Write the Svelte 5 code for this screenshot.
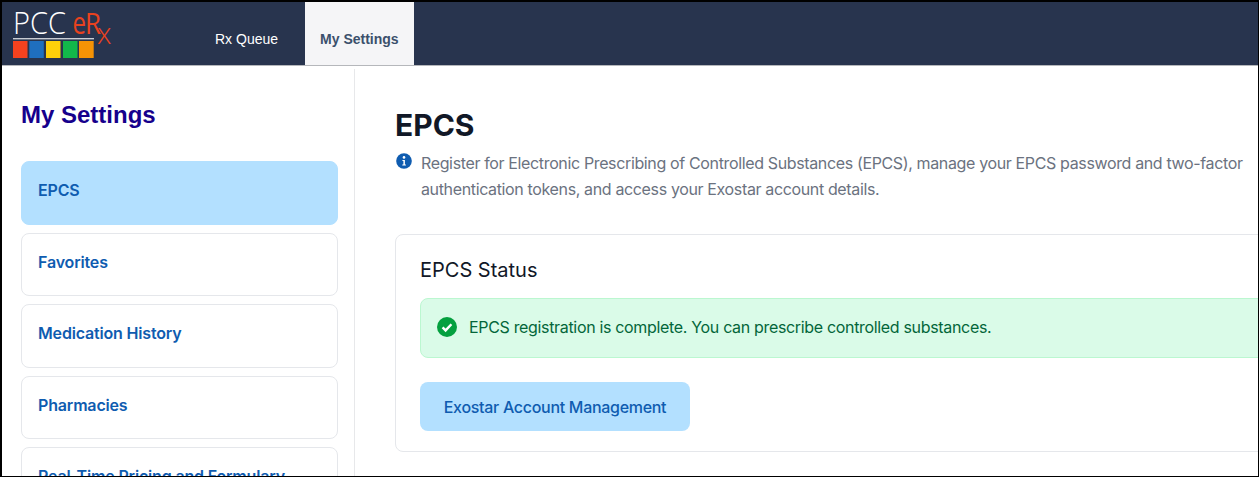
<script lang="ts">
	const tabs = [
		{ label: 'Rx Queue', active: false },
		{ label: 'My Settings', active: true },
	];
	const menu = ['EPCS', 'Favorites', 'Medication History', 'Pharmacies', 'Real-Time Pricing and Formulary'];
	const swatches = [
		{ x: 0, w: 14.5, color: '#f5421f' },
		{ x: 16.3, w: 14.5, color: '#1f6fbf' },
		{ x: 33, w: 14.5, color: '#ffd00a' },
		{ x: 50, w: 14.5, color: '#12b84a' },
		{ x: 66, w: 14.7, color: '#f59305' },
	];
</script>

<div class="frame">
	<header class="topbar">
		<div class="logo">
			<svg width="102" height="58" viewBox="0 0 102 58">
				<text x="0" y="32" class="pcc" textLength="53" lengthAdjust="spacingAndGlyphs">PCC</text>
				<text x="59.5" y="32" class="erx" textLength="13.5" lengthAdjust="spacingAndGlyphs">e</text>
				<text x="72" y="32" class="erx r" textLength="16" lengthAdjust="spacingAndGlyphs">R</text>
				<text x="84" y="42" class="erx x">x</text>
				<rect x="0" y="36" width="81" height="1.4" fill="#c9ccd3" />
				{#each swatches as s}
					<rect x={s.x} y="39" width={s.w} height="17" fill={s.color} />
				{/each}
			</svg>
		</div>
		<nav class="tabs">
			{#each tabs as tab}
				<div class="tab" class:active={tab.active}>{tab.label}</div>
			{/each}
		</nav>
	</header>

	<div class="body">
		<aside class="sidebar">
			<h2>My Settings</h2>
			<div class="menu">
				{#each menu as item, i}
					<div class="item" class:selected={i === 0}>{item}</div>
				{/each}
			</div>
		</aside>

		<main class="content">
			<h1>EPCS</h1>
			<div class="intro">
				<svg class="info" width="16" height="16" viewBox="0 0 16 16">
					<circle cx="8" cy="8" r="7.8" fill="#0f5cb0" />
					<circle cx="8" cy="4.4" r="1.3" fill="#fff" />
					<path d="M6.4 6.9h2.5v4.5h1v1.2H6.3v-1.2h1.1V8.1h-1z" fill="#fff" />
				</svg>
				<p>
					Register for Electronic Prescribing of Controlled Substances (EPCS), manage your EPCS password and two-factor authentication tokens, and access your Exostar account details.
				</p>
			</div>

			<section class="card">
				<h3>EPCS Status</h3>
				<div class="alert">
					<svg width="20" height="20" viewBox="0 0 20 20">
						<circle cx="10" cy="10" r="10" fill="#04a03f" />
						<path d="M5.6 10.4l3 3 5.8-6.2" fill="none" stroke="#fff" stroke-width="2.4" />
					</svg>
					<span>EPCS registration is complete. You can prescribe controlled substances.</span>
				</div>
				<button type="button" class="action">Exostar Account Management</button>
			</section>
		</main>
	</div>
</div>

<style>
	:global(body) {
		margin: 0;
		background: #fff;
	}
	.frame {
		box-sizing: border-box;
		width: 1259px;
		height: 477px;
		border: 1px solid #000;
		border-left-width: 2px;
		border-top-width: 2px;
		overflow: hidden;
		font-family: Inter, sans-serif;
	}
	.topbar {
		display: flex;
		height: 64px;
		box-sizing: border-box;
		background: #28344e;
		border-bottom: 1px solid #b5b7bb;
	}
	.logo {
		width: 203px;
		padding: 0 0 0 11px;
		box-sizing: border-box;
		height: 63px;
	}
	.logo svg {
		display: block;
	}
	.pcc {
		font-family: 'Open Sans', sans-serif;
		font-weight: 300;
		font-size: 31px;
		fill: #fff;
	}
	.erx {
		font-family: 'Open Sans', sans-serif;
		font-weight: 400;
		font-size: 31px;
		fill: #e8421f;
	}
	.erx.r {
		font-size: 30px;
	}
	.erx.x {
		font-size: 29px;
		font-weight: 300;
	}
	.tabs {
		display: flex;
	}
	.tab {
		display: flex;
		align-items: center;
		padding: 11px 15px 0;
		box-sizing: border-box;
		font-family: 'Liberation Sans', sans-serif;
		font-size: 14px;
		font-weight: 400;
		color: #fff;
	}
	.tab:first-child {
		padding: 11px 27px 0 10px;
	}
	.tab.active {
		background: #f5f5f7;
		color: #3b506c;
		font-weight: 700;
	}
	.body {
		display: flex;
		height: 411px;
	}
	.sidebar {
		box-sizing: border-box;
		width: 353px;
		flex: none;
		margin-top: 3px;
		padding: 0 16px 0 19px;
		border-right: 1px solid #e7e8ea;
	}
	h2 {
		margin: 32px 0 32px;
		font-family: 'Liberation Sans', sans-serif;
		font-size: 24px;
		line-height: 28px;
		font-weight: 700;
		color: #16008c;
	}
	.menu {
		display: flex;
		flex-direction: column;
		gap: 8px;
	}
	.item {
		box-sizing: border-box;
		height: 63.5px;
		padding: 18px 16px;
		border: 1px solid #e5e7eb;
		border-radius: 8px;
		font-size: 16px;
		line-height: 20px;
		font-weight: 600;
		letter-spacing: -0.17px;
		color: #0f5cb0;
	}
	.item.selected {
		background: #b3e0ff;
		border-color: #b3e0ff;
	}
	.content {
		flex: none;
		width: 1000px;
		padding: 41px 0 0 40px;
		box-sizing: border-box;
	}
	h1 {
		margin: 0 0 7px;
		font-size: 30px;
		line-height: 36px;
		font-weight: 700;
		color: #111827;
	}
	.intro {
		display: flex;
		gap: 9px;
		width: 860px;
		margin-left: 1px;
	}
	.info {
		flex: none;
		margin-top: 3px;
	}
	.intro p {
		margin: 0;
		font-size: 16px;
		line-height: 26px;
		letter-spacing: -0.36px;
		color: #6b7280;
	}
	.card {
		box-sizing: border-box;
		width: 1000px;
		height: 218px;
		margin-top: 32px;
		padding: 23px 24px;
		border: 1px solid #e5e7eb;
		border-radius: 8px;
	}
	h3 {
		margin: 0 0 16px;
		font-size: 20px;
		line-height: 24px;
		font-weight: 400;
		color: #111827;
	}
	.alert {
		display: flex;
		align-items: center;
		gap: 12px;
		box-sizing: border-box;
		height: 60px;
		padding: 0 16px 2px;
		background: #dafbe8;
		border: 1px solid #bbf7d0;
		border-radius: 8px;
		font-size: 16px;
		letter-spacing: -0.33px;
		color: #03663a;
	}
	.action {
		display: block;
		width: 270px;
		height: 49px;
		margin-top: 24px;
		border: 0;
		border-radius: 8px;
		background: #b3e0ff;
		font-family: inherit;
		font-size: 16px;
		font-weight: 500;
		letter-spacing: -0.3px;
		color: #0f5cb0;
	}
</style>
